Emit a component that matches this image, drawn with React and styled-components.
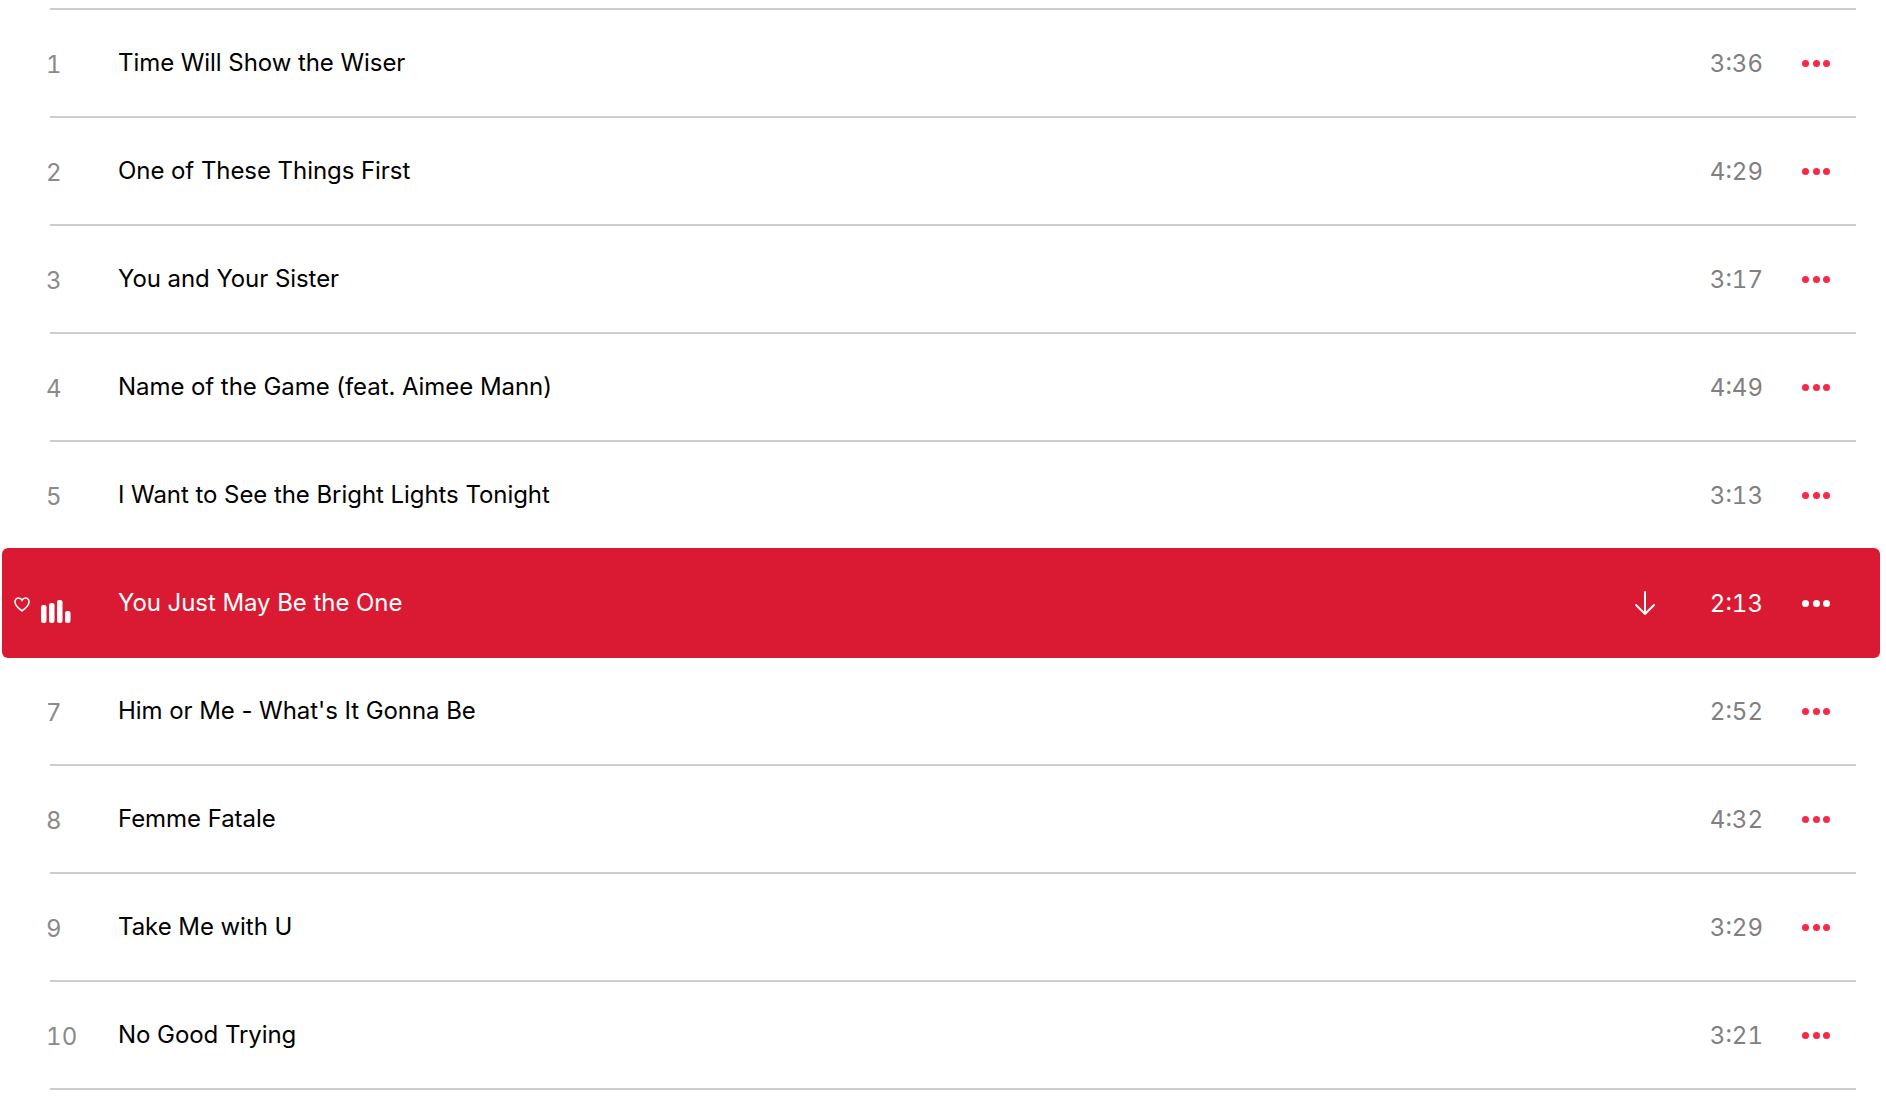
import React from 'react';
import styled, { createGlobalStyle } from 'styled-components';

const tracks = [
	{ number: 1, title: 'Time Will Show the Wiser', time: '3:36' },
	{ number: 2, title: 'One of These Things First', time: '4:29' },
	{ number: 3, title: 'You and Your Sister', time: '3:17' },
	{ number: 4, title: 'Name of the Game (feat. Aimee Mann)', time: '4:49' },
	{ number: 5, title: 'I Want to See the Bright Lights Tonight', time: '3:13' },
	{ number: 6, title: 'You Just May Be the One', time: '2:13', playing: true },
	{ number: 7, title: "Him or Me - What's It Gonna Be", time: '2:52' },
	{ number: 8, title: 'Femme Fatale', time: '4:32' },
	{ number: 9, title: 'Take Me with U', time: '3:29' },
	{ number: 10, title: 'No Good Trying', time: '3:21' },
];

const GlobalStyle = createGlobalStyle`
	body {
		margin: 0;
		background: #ffffff;
		font-family: "Inter", "Liberation Sans", sans-serif;
	}
`;

const List = styled.div`
	padding-top: 8px;
	min-height: 1102px;
`;

const Rule = styled.div`
	height: 2px;
	margin: 0 30px 0 50px;
	background: #cdcdcd;
`;

const Row = styled.div`
	display: flex;
	align-items: center;
	height: ${(p) => (p.$playing ? '110px' : '106px')};
	margin: 0 6px 0 2px;
	padding-right: 50px;
	border-radius: 6px;
	background: ${(p) => (p.$playing ? '#da1a32' : 'transparent')};
	color: ${(p) => (p.$playing ? '#ffffff' : '#000000')};
`;

const Lead = styled.div`
	display: flex;
	align-items: center;
	flex: none;
	width: 116px;
	padding-left: ${(p) => (p.$playing ? '12px' : '44px')};
	box-sizing: border-box;
`;

const Number = styled.span`
	margin-top: 2px;
	font-size: 24px;
	font-variant-numeric: tabular-nums;
	letter-spacing: 0.2px;
	color: #8a8a8a;
`;

const HeartIcon = styled.svg`
	width: 16px;
	height: 15px;
	margin-top: 3px;
	fill: none;
	stroke: #ffffff;
	stroke-width: 1.6;
`;

const Bars = styled.svg`
	width: 30px;
	height: 24px;
	margin: 17px 0 0 11px;
	fill: #ffffff;
`;

const Title = styled.div`
	flex: 1;
	font-size: 24px;
	letter-spacing: -0.06px;
	margin-top: -2px;
`;

const DownloadIcon = styled.svg`
	width: 24px;
	height: 26px;
	margin-right: 46px;
	fill: none;
	stroke: #ffffff;
	stroke-width: 2;
	stroke-linecap: round;
	stroke-linejoin: round;
`;

const Time = styled.div`
	width: 60px;
	margin-top: 1px;
	text-align: right;
	font-size: 24px;
	font-variant-numeric: tabular-nums;
	color: ${(p) => (p.$playing ? '#ffffff' : '#808080')};
`;

const More = styled.div`
	display: flex;
	gap: 3.5px;
	margin-left: 39px;
`;

const Dot = styled.span`
	width: 7px;
	height: 7px;
	border-radius: 50%;
	background: ${(p) => (p.$playing ? '#ffffff' : '#f62a45')};
`;

function PlayingLead() {
	return (
		<Lead $playing>
			<HeartIcon viewBox="0 0 16 15">
				<path d="M8 13.8 C5.8 12.2 1 9 1 5 C1 2.7 2.7 1 4.6 1 C6 1 7.3 1.8 8 3.2 C8.7 1.8 10 1 11.4 1 C13.3 1 15 2.7 15 5 C15 9 10.2 12.2 8 13.8 Z" />
			</HeartIcon>
			<Bars viewBox="0 0 30 24">
				<rect x="0" y="5" width="5.5" height="18" rx="2.2" />
				<rect x="8" y="3" width="5.5" height="20" rx="2.2" />
				<rect x="16" y="0" width="5.5" height="23" rx="2.2" />
				<rect x="24" y="11" width="5.5" height="12" rx="2.2" />
			</Bars>
		</Lead>
	);
}

function Track({ track }) {
	const { number, title, time, playing } = track;
	return (
		<Row $playing={playing}>
			{playing ? (
				<PlayingLead />
			) : (
				<Lead>
					<Number>{number}</Number>
				</Lead>
			)}
			<Title>{title}</Title>
			{playing && (
				<DownloadIcon viewBox="0 0 24 26">
					<path d="M12 2 V24 M3 15 L12 24 L21 15" />
				</DownloadIcon>
			)}
			<Time $playing={playing}>{time}</Time>
			<More>
				<Dot $playing={playing} />
				<Dot $playing={playing} />
				<Dot $playing={playing} />
			</More>
		</Row>
	);
}

export default function App() {
	return (
		<>
			<GlobalStyle />
			<List>
				<Rule />
				{tracks.map((track, i) => {
					const next = tracks[i + 1];
					const showRule = !track.playing && !(next && next.playing);
					return (
						<React.Fragment key={track.number}>
							<Track track={track} />
							{showRule && <Rule />}
						</React.Fragment>
					);
				})}
			</List>
		</>
	);
}
